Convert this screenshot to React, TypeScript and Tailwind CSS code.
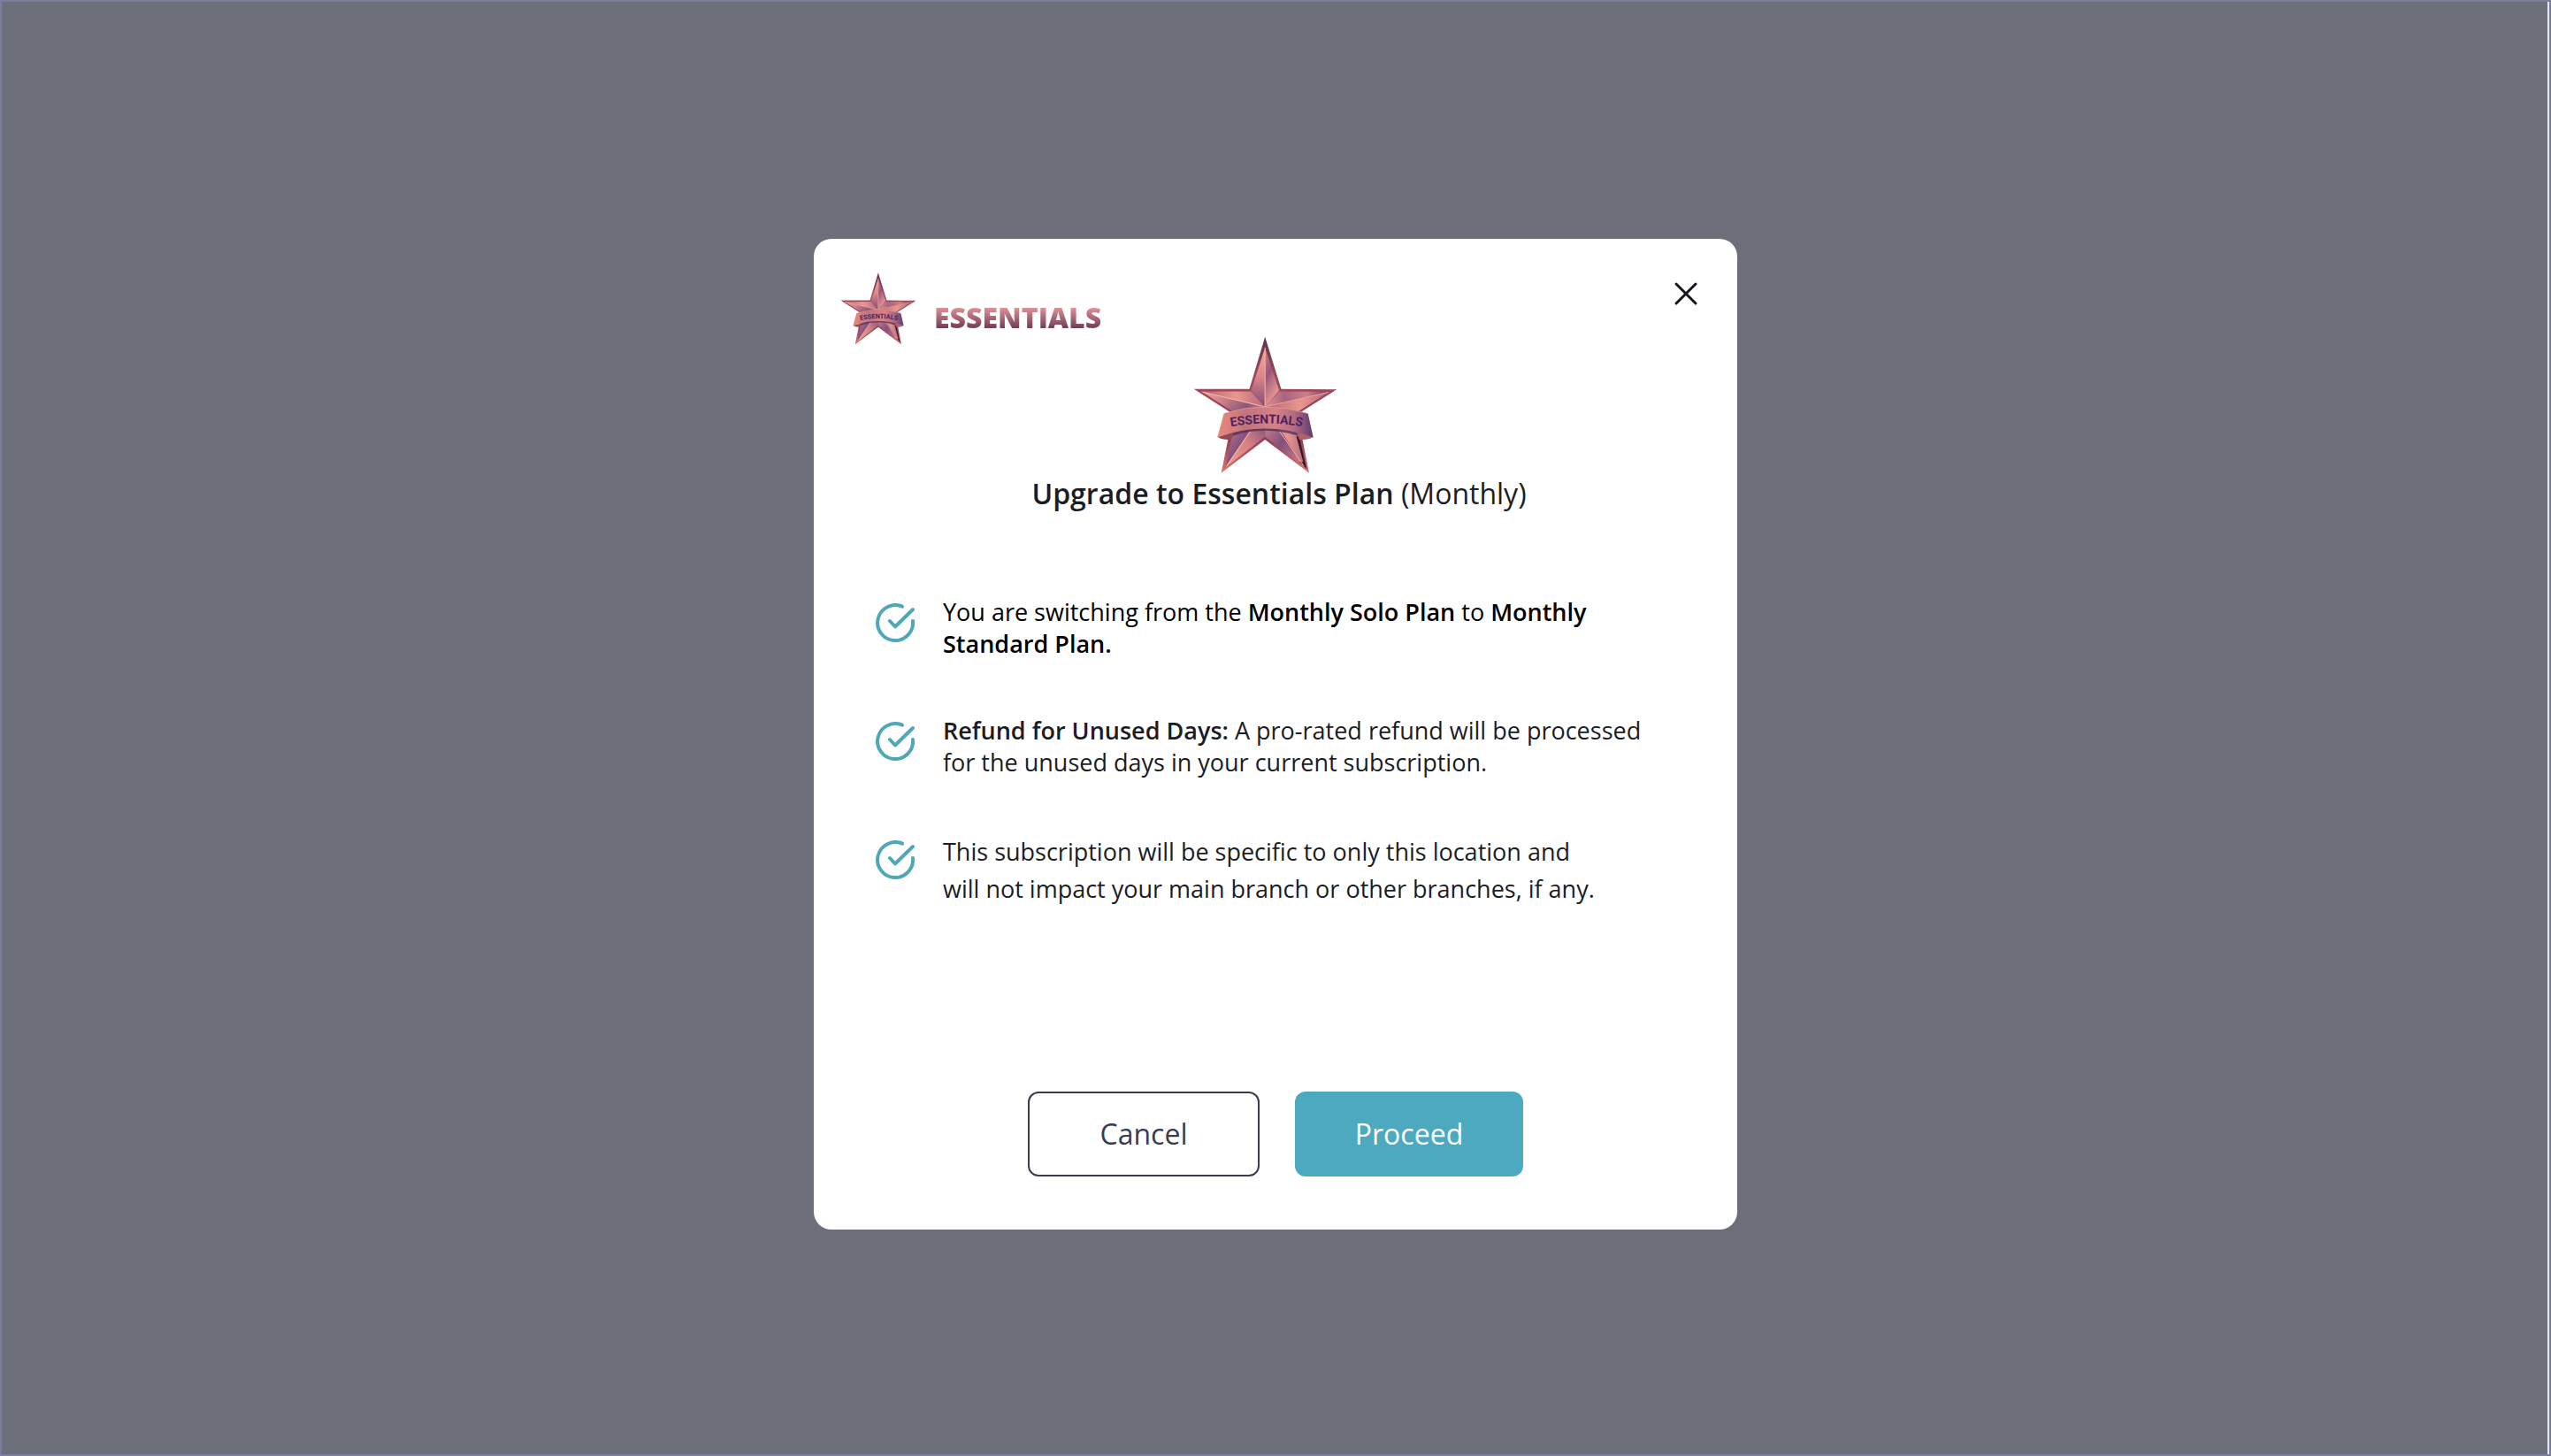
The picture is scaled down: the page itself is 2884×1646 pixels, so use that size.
import { useId } from 'react';
import type { ReactNode } from 'react';

const points: { icon: string; text: ReactNode; className: string }[] = [
  {
    icon: 'switch',
    className: 'leading-9 text-black',
    text: (
      <>
        You are switching from the <b className="font-semibold">Monthly Solo Plan</b> to{' '}
        <b className="font-semibold">Monthly</b>
        <br />
        <b className="font-semibold">Standard Plan.</b>
      </>
    ),
  },
  {
    icon: 'refund',
    className: 'leading-9 text-[#1b1d25]',
    text: (
      <>
        <b className="font-semibold">Refund for Unused Days:</b> A pro-rated refund will be processed
        <br />
        for the unused days in your current subscription.
      </>
    ),
  },
  {
    icon: 'location',
    className: 'leading-[42px] text-[#1b1d25]',
    text: (
      <>
        This subscription will be specific to only this location and
        <br />
        will not impact your main branch or other branches, if any.
      </>
    ),
  },
];

function StarBadge({ className }: { className: string }) {
  const id = useId();
  const ref = (name: string) => `url(#${id}${name})`;

  return (
    <svg viewBox="86 60 490 468" className={className} aria-hidden="true">
      <defs>
        <linearGradient id={`${id}edge`} x1="0" y1="0" x2="0" y2="1">
          <stop offset="0" stopColor="#5f3549" />
          <stop offset="0.3" stopColor="#a04a5c" />
          <stop offset="0.75" stopColor="#8f3d54" />
          <stop offset="1" stopColor="#d9786f" />
        </linearGradient>
        <linearGradient id={`${id}down`} x1="0" y1="0" x2="0" y2="1">
          <stop offset="0" stopColor="#f0aaa0" />
          <stop offset="0.5" stopColor="#d98488" />
          <stop offset="1" stopColor="#7d4a78" />
        </linearGradient>
        <linearGradient id={`${id}up`} x1="0" y1="0" x2="0.4" y2="1">
          <stop offset="0" stopColor="#d98085" />
          <stop offset="0.45" stopColor="#99567c" />
          <stop offset="1" stopColor="#f0a096" />
        </linearGradient>
        <linearGradient id={`${id}side`} x1="0" y1="0" x2="1" y2="0">
          <stop offset="0" stopColor="#b5626f" />
          <stop offset="0.55" stopColor="#e8978f" />
          <stop offset="1" stopColor="#b4687c" />
        </linearGradient>
        <linearGradient id={`${id}sideDark`} x1="0" y1="0" x2="1" y2="0.3">
          <stop offset="0" stopColor="#f0a398" />
          <stop offset="0.4" stopColor="#d3838a" />
          <stop offset="0.85" stopColor="#8d5578" />
          <stop offset="1" stopColor="#b96c7d" />
        </linearGradient>
        <linearGradient id={`${id}right`} x1="0" y1="0" x2="1" y2="0">
          <stop offset="0" stopColor="#e4918d" />
          <stop offset="0.3" stopColor="#a9647f" />
          <stop offset="0.65" stopColor="#cf7f84" />
          <stop offset="1" stopColor="#663c68" />
        </linearGradient>
        <linearGradient id={`${id}leg`} x1="1" y1="0" x2="0" y2="1">
          <stop offset="0" stopColor="#6f4272" />
          <stop offset="0.5" stopColor="#d27f84" />
          <stop offset="1" stopColor="#f3a592" />
        </linearGradient>
        <linearGradient id={`${id}legDark`} x1="0" y1="0" x2="1" y2="1">
          <stop offset="0" stopColor="#e38f8c" />
          <stop offset="0.5" stopColor="#845080" />
          <stop offset="1" stopColor="#dd8582" />
        </linearGradient>
        <linearGradient id={`${id}band`} x1="0" y1="0" x2="1" y2="0">
          <stop offset="0" stopColor="#e68a7d" />
          <stop offset="0.14" stopColor="#d97f7c" />
          <stop offset="0.3" stopColor="#c07480" />
          <stop offset="0.6" stopColor="#d68287" />
          <stop offset="0.8" stopColor="#b36c82" />
          <stop offset="1" stopColor="#5c3a70" />
        </linearGradient>
        <path id={`${id}arc`} d="M196 371Q335 342 474 371" />
      </defs>

      {/* rim */}
      <path
        d="M330 62L385 240L574 241L440 325L480 525L330 412L181 525L222 325L88 240L277 240Z"
        fill={ref('edge')}
      />

      {/* upper arm */}
      <path d="M330 100L283 244L330 302Z" fill={ref('down')} />
      <path d="M330 100L378 244L330 302Z" fill={ref('up')} />
      {/* left arm */}
      <path d="M114 248L283 248L330 302Z" fill={ref('side')} />
      <path d="M114 248L222 318L330 302Z" fill={ref('sideDark')} />
      {/* right arm */}
      <path d="M548 249L378 248L330 302Z" fill={ref('right')} />
      <path d="M548 249L440 318L330 302Z" fill={ref('side')} />
      {/* legs */}
      <path d="M196 505L232 330L330 302Z" fill={ref('legDark')} />
      <path d="M196 505L330 402L330 302Z" fill={ref('leg')} />
      <path d="M465 505L428 330L330 302Z" fill={ref('side')} />
      <path d="M465 505L330 402L330 302Z" fill={ref('legDark')} />
      <path d="M436 400L446 402L472 512L446 486L460 488Z" fill="#3a1730" />

      {/* ridges */}
      <g stroke="#f7bdae" strokeWidth="3" fill="none" strokeLinecap="round">
        <path d="M330 100V300" />
        <path d="M118 250L328 300" />
        <path d="M544 251L332 300" stroke="#e9a49d" />
        <path d="M200 500L290 370" />
        <path d="M461 500L370 370" />
      </g>

      {/* ribbon shadow, tails and front */}
      <path d="M218 400Q330 362 444 400L440 378Q330 356 222 378Z" fill="#4e2c55" opacity="0.75" />
      <path d="M168 402Q188 415 216 411L222 386Z" fill="#8f4a58" />
      <path d="M494 402Q474 415 446 411L438 386Z" fill="#b0626c" />
      <path d="M190 323Q330 278 476 323L494 404Q330 344 168 404Z" fill={ref('band')} />
      <path d="M190 323Q330 278 476 323" fill="none" stroke="#e9a097" strokeWidth="2" />
      <text
        fontFamily="Roboto, sans-serif"
        fontSize="42"
        fontWeight="700"
        fill="#4e1f5c"
      >
        <textPath href={`#${id}arc`} startOffset="50%" textAnchor="middle">
          ESSENTIALS
        </textPath>
      </text>
    </svg>
  );
}

function CheckIcon() {
  return (
    <svg
      viewBox="0 0 44 44"
      className="mt-2 size-11 shrink-0 text-[#4fa7b8]"
      fill="none"
      stroke="currentColor"
      strokeWidth="4"
      strokeLinecap="round"
      strokeLinejoin="round"
      aria-hidden="true"
    >
      <path d="M30 3.7A20 20 0 1 0 42 20" />
      <path d="M16 20L22 26.500L42 7" />
    </svg>
  );
}

export default function App() {
  return (
    <div className="flex min-h-screen items-center justify-center border-2 border-[#7a7ca0] bg-[#6c6e79] pt-3.5 font-['Open_Sans',sans-serif] shadow-[inset_-2px_0_0_#e8e9f0]">
      <div
        role="dialog"
        aria-labelledby="dialog-title"
        className="w-full max-w-[1044px] rounded-[20px] bg-white pb-[60px]"
      >
        {/* Header */}
        <div className="flex items-start justify-between pt-[38px] pr-10 pl-[30px]">
          <div className="flex items-center gap-5">
            <StarBadge className="w-[86px]" />
            <span className="mt-5 bg-linear-to-b from-[#e8949a] from-20% to-[#6f3f58] to-80% bg-clip-text text-[32px] leading-10 font-extrabold text-transparent">
              ESSENTIALS
            </span>
          </div>
          <button type="button" aria-label="Close" className="mt-1.5 p-1">
            <svg
              viewBox="0 0 28 28"
              className="size-7"
              stroke="#15171f"
              strokeWidth="3"
              strokeLinecap="round"
              aria-hidden="true"
            >
              <path d="M3 3L25 25M25 3L3 25" />
            </svg>
          </button>
        </div>

        {/* Plan */}
        <div className="-mt-2.5 flex flex-col items-center">
          <StarBadge className="mr-6 w-[163px]" />
          <h2 id="dialog-title" className="pl-2 text-[32px] leading-11 font-semibold text-[#1b1d25]">
            Upgrade to Essentials Plan <span className="font-normal">(Monthly)</span>
          </h2>
        </div>

        {/* Details */}
        <ul className="mt-[94px] flex flex-col gap-[62px] pr-10 pl-[70px]">
          {points.map((point) => (
            <li key={point.icon} className="flex items-start gap-8">
              <CheckIcon />
              <p className={`text-[27px] ${point.className}`}>{point.text}</p>
            </li>
          ))}
        </ul>

        {/* Actions */}
        <div className="mt-[208px] flex justify-center gap-10">
          <button
            type="button"
            className="h-24 w-[262px] rounded-xl border-2 border-[#3b3c50] text-[32px] font-medium text-[#3b3c50]"
          >
            Cancel
          </button>
          <button
            type="button"
            className="h-24 w-[258px] rounded-xl bg-[#4da9bf] text-[32px] font-medium text-white"
          >
            Proceed
          </button>
        </div>
      </div>
    </div>
  );
}
